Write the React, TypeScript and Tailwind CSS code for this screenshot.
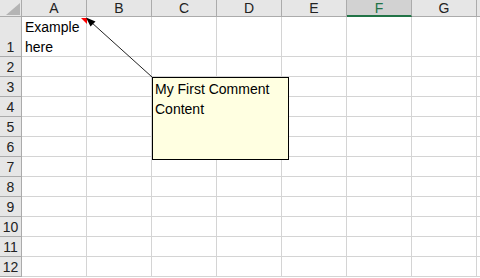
const cols = ["A", "B", "C", "D", "E", "F", "G"];
const rows = [1, 2, 3, 4, 5, 6, 7, 8, 9, 10, 11, 12];

function ColHeader({ label }: { label: string }) {
  const selected = label === "F";
  return (
    <div
      className={
        selected
          ? "h-[17px] flex items-center justify-center bg-[#d2d2d2] border-r border-[#ababab] border-b-2 border-b-[#217346] text-[#217346]"
          : "h-[17px] flex items-center justify-center bg-[#e6e6e6] border-r border-b border-[#ababab] text-[#222]"
      }
    >
      {label}
    </div>
  );
}

export default function App() {
  return (
    <div className="relative w-[480px] h-[278px] overflow-hidden bg-white font-['Liberation_Sans',Arial,sans-serif] text-[14px] leading-none">
      <div className="grid grid-cols-[22px_repeat(7,65px)_1fr] grid-rows-[17px_40px_repeat(11,20px)]">
        {/* corner */}
        <div className="relative bg-[#e6e6e6] border-r border-b border-[#ababab]">
          <svg className="absolute left-[6px] top-[3px]" width="14" height="12" viewBox="0 0 14 12">
            <polygon points="14,0 14,12 0,12" fill="#b4b4b4" />
          </svg>
        </div>
        {cols.map((c) => (
          <ColHeader key={c} label={c} />
        ))}
        <div className="bg-[#e6e6e6] border-b border-[#ababab]" />

        {rows.map((r) => (
          <div key={r} className="contents">
            <div className="flex items-end justify-center pb-[2px] bg-[#e6e6e6] border-r border-b border-[#ababab] text-[#222]">
              {r}
            </div>
            {cols.map((c) => (
              <div key={c} className="border-r border-b border-[#d4d4d4] text-black">
                {r === 1 && c === "A" ? (
                  <div className="pl-[3px] leading-[20px] text-[14px]">
                    Example
                    <br />
                    here
                  </div>
                ) : null}
              </div>
            ))}
            <div className="border-b border-[#d4d4d4]" />
          </div>
        ))}
      </div>

      {/* comment indicator + arrow */}
      <svg className="absolute left-0 top-0 pointer-events-none" width="480" height="278" viewBox="0 0 480 278">
        <polygon points="81,18 87,18 87,24" fill="#ff0000" />
        <line x1="152" y1="77" x2="91" y2="22" stroke="#222" strokeWidth="1" />
        <polygon points="86,17.5 95.5,21.5 90.5,26.5" fill="#000" />
      </svg>

      {/* comment box */}
      <div className="absolute left-[152px] top-[77px] w-[137px] h-[83px] bg-[#ffffe1] border border-black px-[2px] pt-[1px] text-[14px] leading-[20px] text-black">
        My First Comment
        <br />
        Content
      </div>
    </div>
  );
}
